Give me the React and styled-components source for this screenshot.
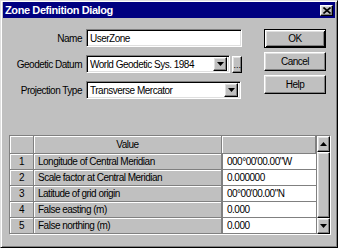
import React from 'react';
import styled, { createGlobalStyle, css } from 'styled-components';

const Global = createGlobalStyle`
  html, body { margin: 0; padding: 0; background: #c0c0c0; }
  body { font-family: "Liberation Sans", Arial, sans-serif; font-size: 10px; letter-spacing: -0.5px; color: #000; }
  * { box-sizing: border-box; }
`;

const raised = css`
  border: 1px solid;
  border-color: #fff #000 #000 #fff;
  box-shadow: inset -1px -1px #808080, inset 1px 1px #dfdfdf;
  background: #c0c0c0;
`;

const sunken = css`
  border: 1px solid;
  border-color: #808080 #fff #fff #808080;
  box-shadow: inset 1px 1px #000, inset -1px -1px #dfdfdf;
  background: #fff;
`;

const Window = styled.div`
  width: 338px;
  height: 248px;
  background: #c0c0c0;
  border: 1px solid;
  border-color: #dfdfdf #000 #000 #dfdfdf;
  box-shadow: inset 1px 1px #fff, inset -1px -1px #808080;
  padding: 1px 2px 2px 2px;
  display: flex;
  flex-direction: column;
`;

const TitleBar = styled.div`
  height: 16px;
  background: #000080;
  display: flex;
  align-items: center;
  justify-content: space-between;
  padding: 0 2px 0 2px;
`;

const Title = styled.span`
  color: #fff;
  font-weight: bold;
  font-size: 11px;
  letter-spacing: -0.4px;
`;

const CloseButton = styled.div`
  ${raised}
  width: 13px;
  height: 11px;
  display: flex;
  align-items: center;
  justify-content: center;
`;

const Top = styled.div`
  display: flex;
  margin-top: 11px;
`;

const Form = styled.div`
  display: grid;
  grid-template-columns: 79px 156px;
  column-gap: 4px;
  row-gap: 8px;
  align-items: center;
`;

const Label = styled.label`
  text-align: right;
  white-space: nowrap;
`;

const Field = styled.div`
  ${sunken}
  height: 18px;
  width: ${p => p.$w || 156}px;
  display: flex;
  align-items: center;
  padding: 0 2px 0 3px;
  white-space: nowrap;
  overflow: hidden;
`;

const FieldText = styled.span`
  flex: 1;
  overflow: hidden;
`;

const DropButton = styled.div`
  ${raised}
  width: 14px;
  height: 14px;
  display: flex;
  align-items: center;
  justify-content: center;
  flex: none;
`;

const FieldRow = styled.div`
  display: flex;
  align-items: center;
  gap: 2px;
`;

const DotsButton = styled.div`
  ${raised}
  width: 10px;
  height: 17px;
  display: flex;
  align-items: flex-end;
  justify-content: center;
  line-height: 10px;
  padding-bottom: 2px;
  letter-spacing: 0;
  font-size: 9px;
`;

const Buttons = styled.div`
  margin-left: 22px;
  display: flex;
  flex-direction: column;
  gap: 4px;
`;

const Button = styled.div`
  ${raised}
  width: 62px;
  height: 19px;
  display: flex;
  align-items: center;
  justify-content: center;
  ${p => p.$default && css`
    border: 1px solid #000;
    box-shadow: inset 1px 1px #fff, inset -1px -1px #000, inset 2px 2px #dfdfdf, inset -2px -2px #808080;
  `}
`;

const TableFrame = styled.div`
  margin: 36px 4px 0 6px;
  height: 100px;
  border: 1px solid;
  border-color: #808080 #fff #fff #808080;
  display: flex;
`;

const Grid = styled.div`
  flex: 1;
  display: grid;
  grid-template-columns: 24px 188px 1fr;
  grid-template-rows: 18px repeat(5, 16px);
  background: #c0c0c0;
  align-content: start;
`;

const HeadCell = styled.div`
  background: #c0c0c0;
  border-right: 1px solid #808080;
  border-bottom: 1px solid #808080;
  box-shadow: inset 1px 1px #fff;
  display: flex;
  align-items: center;
  justify-content: ${p => p.$align || 'center'};
  padding: 0 4px;
  white-space: nowrap;
`;

const ValueCell = styled.div`
  background: #fff;
  border-bottom: 1px solid #808080;
  border-left: 1px solid #808080;
  display: flex;
  align-items: center;
  padding: 0 4px;
  white-space: nowrap;
  overflow: hidden;
`;

const ScrollBar = styled.div`
  width: 14px;
  display: flex;
  flex-direction: column;
  background: #c0c0c0;
  border-left: 1px solid #808080;
`;

const ScrollArrow = styled.div`
  ${raised}
  height: 16px;
  display: flex;
  align-items: center;
  justify-content: center;
  flex: none;
`;

const Thumb = styled.div`
  ${raised}
  flex: 1;
`;

const Down = () => (
  <svg width="7" height="4" viewBox="0 0 7 4"><path d="M0 0h7L3.5 4z" fill="#000" /></svg>
);
const Up = () => (
  <svg width="7" height="4" viewBox="0 0 7 4"><path d="M0 4h7L3.5 0z" fill="#000" /></svg>
);

const rows = [
  ['Longitude of Central Meridian', '000°00\'00.00"W'],
  ['Scale factor at Central Meridian', '0.000000'],
  ['Latitude of grid origin', '00°00\'00.00"N'],
  ['False easting (m)', '0.000'],
  ['False northing (m)', '0.000'],
];

export default function App() {
  return (
    <>
      <Global />
      <Window>
        <TitleBar>
          <Title>Zone Definition Dialog</Title>
          <CloseButton>
            <svg width="8" height="7" viewBox="0 0 8 7">
              <path d="M0.5 0.5L7.5 6.5M7.5 0.5L0.5 6.5" stroke="#000" strokeWidth="1.6" />
            </svg>
          </CloseButton>
        </TitleBar>
        <Top>
          <Form>
            <Label>Name</Label>
            <Field>UserZone</Field>
            <Label>Geodetic Datum</Label>
            <FieldRow>
              <Field $w={155}>
                <FieldText>World Geodetic Sys. 1984</FieldText>
                <DropButton><Down /></DropButton>
              </Field>
              <DotsButton>...</DotsButton>
            </FieldRow>
            <Label>Projection Type</Label>
            <Field $w={155}>
              <FieldText>Transverse Mercator</FieldText>
              <DropButton><Down /></DropButton>
            </Field>
          </Form>
          <Buttons>
            <Button $default>OK</Button>
            <Button>Cancel</Button>
            <Button>Help</Button>
          </Buttons>
        </Top>
        <TableFrame>
          <Grid>
            <HeadCell />
            <HeadCell>Value</HeadCell>
            <HeadCell />
            {rows.map(([name, value], i) => (
              <React.Fragment key={i}>
                <HeadCell>{i + 1}</HeadCell>
                <HeadCell $align="flex-start">{name}</HeadCell>
                <ValueCell>{value}</ValueCell>
              </React.Fragment>
            ))}
          </Grid>
          <ScrollBar>
            <ScrollArrow><Up /></ScrollArrow>
            <Thumb />
            <ScrollArrow><Down /></ScrollArrow>
          </ScrollBar>
        </TableFrame>
      </Window>
    </>
  );
}
